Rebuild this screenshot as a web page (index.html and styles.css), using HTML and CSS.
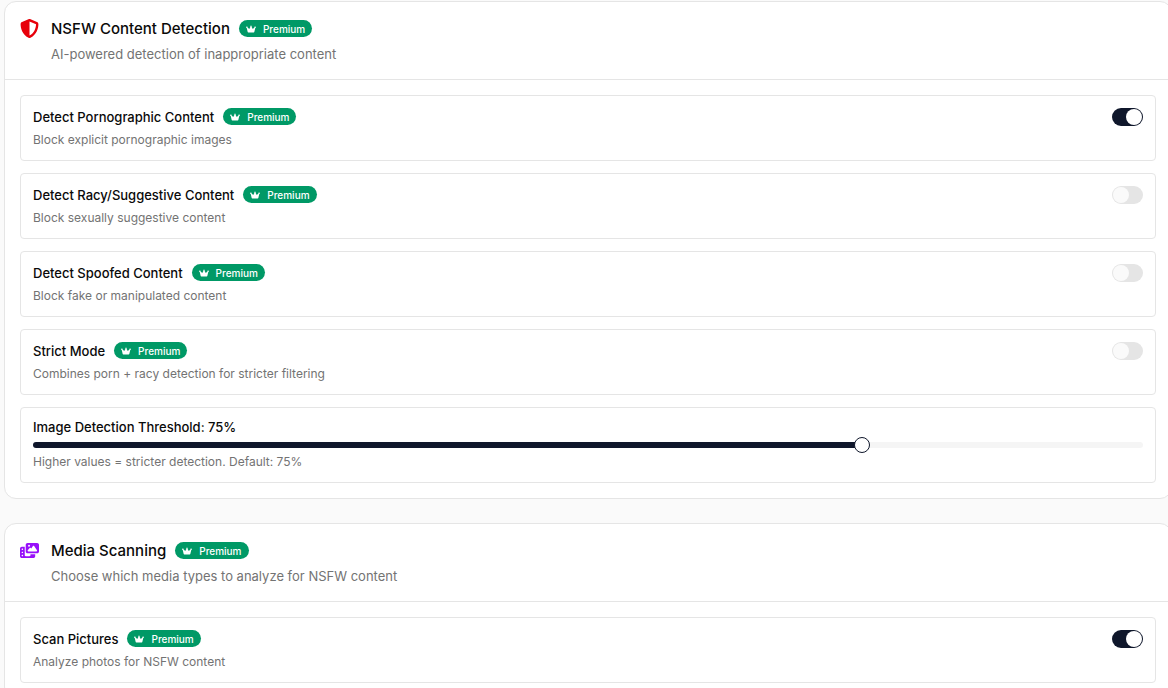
FILE: index.html
```
<!DOCTYPE html>
<html lang="en">
<head>
<meta charset="utf-8">
<meta name="viewport" content="width=device-width, initial-scale=1">
<title>Content moderation settings</title>
<link rel="stylesheet" href="styles.css">
</head>
<body>
<svg class="sprite" aria-hidden="true">
  <symbol id="crown" viewBox="0 0 20 16"><path d="M10 1a1.500 1.500 0 0 1 1 2.600L13.500 8 17 5.200A1.500 1.500 0 1 1 18.500 6L16.600 14.200Q16.400 15 15.500 15H4.500Q3.600 15 3.400 14.200L1.500 6A1.500 1.500 0 1 1 3 5.200L6.500 8 9 3.600A1.500 1.500 0 0 1 10 1z"/></symbol>
</svg>
<main class="page">
  <section class="card">
    <header class="card-header">
      <svg class="card-icon shield" viewBox="0 0 512 512" aria-hidden="true"><path d="M256 0c4.600 0 9.200 1 13.400 2.900L457.700 82.800c22 9.300 38.400 31 38.300 57.200c-.5 99.200-41.300 280.700-213.600 363.200c-16.700 8-36.100 8-52.800 0C57.300 420.700 16.500 239.200 16 140c-.1-26.200 16.300-47.900 38.300-57.200L242.700 2.900C246.800 1 251.400 0 256 0zm0 66.800l0 378.100C394 378 431.100 230.100 432 141.400L256 66.800z"/></svg>
      <div class="card-heading">
        <div class="title-row">
          <h2 class="card-title">NSFW Content Detection</h2>
          <span class="badge"><svg class="crown" aria-hidden="true"><use href="#crown"/></svg>Premium</span>
        </div>
        <p class="card-text">AI-powered detection of inappropriate content</p>
      </div>
    </header>
    <div class="card-body">
      <div class="setting">
        <div class="setting-info">
          <div class="title-row">
            <label class="setting-title" for="porn">Detect Pornographic Content</label>
            <span class="badge"><svg class="crown" aria-hidden="true"><use href="#crown"/></svg>Premium</span>
          </div>
          <p class="setting-text">Block explicit pornographic images</p>
        </div>
        <input class="switch" type="checkbox" role="switch" id="porn" checked>
      </div>
      <div class="setting">
        <div class="setting-info">
          <div class="title-row">
            <label class="setting-title" for="racy">Detect Racy/Suggestive Content</label>
            <span class="badge"><svg class="crown" aria-hidden="true"><use href="#crown"/></svg>Premium</span>
          </div>
          <p class="setting-text">Block sexually suggestive content</p>
        </div>
        <input class="switch" type="checkbox" role="switch" id="racy">
      </div>
      <div class="setting">
        <div class="setting-info">
          <div class="title-row">
            <label class="setting-title" for="spoofed">Detect Spoofed Content</label>
            <span class="badge"><svg class="crown" aria-hidden="true"><use href="#crown"/></svg>Premium</span>
          </div>
          <p class="setting-text">Block fake or manipulated content</p>
        </div>
        <input class="switch" type="checkbox" role="switch" id="spoofed">
      </div>
      <div class="setting">
        <div class="setting-info">
          <div class="title-row">
            <label class="setting-title" for="strict">Strict Mode</label>
            <span class="badge"><svg class="crown" aria-hidden="true"><use href="#crown"/></svg>Premium</span>
          </div>
          <p class="setting-text">Combines porn + racy detection for stricter filtering</p>
        </div>
        <input class="switch" type="checkbox" role="switch" id="strict">
      </div>
      <div class="setting threshold">
        <label class="setting-title" for="threshold">Image Detection Threshold: 75%</label>
        <input class="slider" type="range" id="threshold" min="0" max="100" value="75" style="--value: 75%">
        <p class="setting-text">Higher values = stricter detection. Default: 75%</p>
      </div>
    </div>
  </section>

  <section class="card">
    <header class="card-header">
      <svg class="card-icon film" viewBox="0 0 640 512" aria-hidden="true"><path d="M256 0H576c35.300 0 64 28.700 64 64V288c0 35.300-28.700 64-64 64H256c-35.300 0-64-28.700-64-64V64c0-35.300 28.700-64 64-64zM476 106.700C471.500 100 464 96 456 96s-15.500 4-20 10.700l-56 84L362.700 169c-4.600-5.700-11.500-9-18.700-9s-14.200 3.300-18.700 9l-64 80c-5.800 7.200-6.900 17.100-2.900 25.400s12.400 13.600 21.600 13.600h80 48H552c8.900 0 17-4.900 21.200-12.700s3.700-17.300-1.200-24.600l-96-144zM336 96a32 32 0 1 0 -64 0 32 32 0 1 0 64 0zM64 128h96V384v32c0 17.700 14.300 32 32 32H320c17.700 0 32-14.300 32-32V384H512v64c0 35.300-28.700 64-64 64H64c-35.300 0-64-28.700-64-64V192c0-35.300 28.700-64 64-64zm8 64c-8.800 0-16 7.200-16 16v16c0 8.800 7.200 16 16 16H88c8.800 0 16-7.200 16-16V208c0-8.800-7.200-16-16-16H72zm0 104c-8.800 0-16 7.200-16 16v16c0 8.800 7.200 16 16 16H88c8.800 0 16-7.200 16-16V312c0-8.800-7.200-16-16-16H72zm0 104c-8.800 0-16 7.200-16 16v16c0 8.800 7.200 16 16 16H88c8.800 0 16-7.200 16-16V416c0-8.800-7.200-16-16-16H72z"/></svg>
      <div class="card-heading">
        <div class="title-row">
          <h2 class="card-title">Media Scanning</h2>
          <span class="badge"><svg class="crown" aria-hidden="true"><use href="#crown"/></svg>Premium</span>
        </div>
        <p class="card-text">Choose which media types to analyze for NSFW content</p>
      </div>
    </header>
    <div class="card-body">
      <div class="setting">
        <div class="setting-info">
          <div class="title-row">
            <label class="setting-title" for="pictures">Scan Pictures</label>
            <span class="badge"><svg class="crown" aria-hidden="true"><use href="#crown"/></svg>Premium</span>
          </div>
          <p class="setting-text">Analyze photos for NSFW content</p>
        </div>
        <input class="switch" type="checkbox" role="switch" id="pictures" checked>
      </div>
    </div>
  </section>
</main>
</body>
</html>
```
FILE: styles.css
```
* { box-sizing: border-box; }

html { overflow-x: hidden; scrollbar-width: none; }

body {
  margin: 0;
  background: #fafafa;
  color: #0a0a0a;
  font-family: Inter, "Liberation Sans", sans-serif;
}

h2, p { margin: 0; }

.sprite { display: none; }

.page {
  display: flex;
  flex-direction: column;
  gap: 24px;
  margin: 1px -4px 0 4px;
}

.card {
  background: #fff;
  border: 1px solid #e5e5e5;
  border-radius: 12px;
}

.card-header {
  display: flex;
  align-items: flex-start;
  gap: 12px;
  padding: 15px 15px 14px;
  border-bottom: 1px solid #e5e5e5;
}

.card-icon {
  width: 19px;
  height: 19px;
  margin-top: 2px;
  flex: none;
}

.shield { fill: #e7000b; }
.film { fill: #9810fa; }

.title-row {
  display: flex;
  align-items: center;
  gap: 9px;
}

.card-title {
  font-size: 15px;
  font-weight: 500;
  line-height: 24px;
}

.card-text {
  margin-top: 2px;
  color: #737373;
  font-size: 13px;
  line-height: 22px;
}

.badge {
  display: inline-flex;
  align-items: center;
  gap: 8px;
  height: 17px;
  margin-bottom: 1px;
  padding: 0 7px;
  border-radius: 9px;
  background: #009966;
  color: #fff;
  font-size: 10px;
  font-weight: 500;
  line-height: 16px;
}

.crown {
  width: 10px;
  height: 8px;
  margin-right: -1px;
  fill: currentColor;
}

.card-body {
  display: flex;
  flex-direction: column;
  gap: 12px;
  padding: 15px;
}

.setting {
  display: flex;
  justify-content: space-between;
  align-items: flex-start;
  padding: 11px 12px;
  border: 1px solid #e5e5e5;
  border-radius: 4px;
}

.setting-title {
  font-size: 13px;
  font-weight: 500;
  line-height: 20px;
}

.setting-text {
  margin-top: 4px;
  color: #737373;
  font-size: 12px;
  line-height: 18px;
}

.switch {
  appearance: none;
  flex: none;
  display: flex;
  align-items: center;
  width: 31px;
  height: 18px;
  margin: 1px 0 0;
  padding: 0 1px;
  border-radius: 9px;
  background: #e5e5e5;
  cursor: pointer;
}

.switch::before {
  content: "";
  width: 16px;
  height: 16px;
  border-radius: 50%;
  background: #fafafa;
}

.switch:checked {
  justify-content: flex-end;
  background: #0f172b;
}

.switch:checked::before { background: #fff; }

.threshold {
  flex-direction: column;
  align-items: stretch;
  padding: 9px 12px 11px;
}

.threshold .setting-text { margin-top: 0; }

.slider {
  appearance: none;
  width: 100%;
  height: 16px;
  margin: 0;
  background: transparent;
  cursor: pointer;
}

.slider::-webkit-slider-runnable-track {
  height: 6px;
  border-radius: 3px;
  background: linear-gradient(to right, #0f172b var(--value), #f5f5f5 var(--value));
}

.slider::-webkit-slider-thumb {
  appearance: none;
  width: 16px;
  height: 16px;
  margin-top: -5px;
  border: 1px solid #0f172b;
  border-radius: 50%;
  background: #fff;
}
```
